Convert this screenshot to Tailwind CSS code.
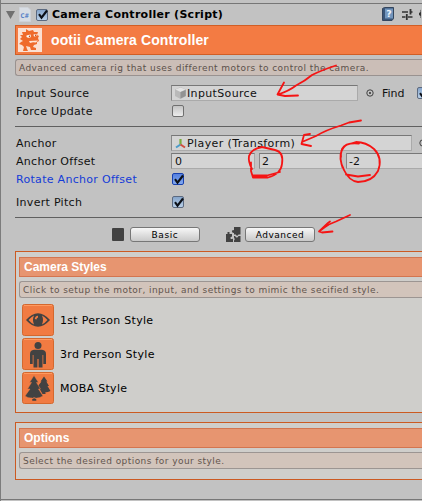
<!DOCTYPE html>
<html lang="en">
<head>
<meta charset="utf-8">
<title>Camera Controller</title>
<script src="https://cdn.jsdelivr.net/npm/@tailwindcss/browser@4"></script>
</head>
<body class="relative h-[501px] w-[422px] overflow-hidden bg-[#c2c2c2] font-['DejaVu_Sans',sans-serif] text-[11px] leading-[16px] text-[#111] whitespace-nowrap">
<svg width="0" height="0" class="absolute">
  <defs>
    <symbol id="tick" viewBox="0 0 13 13"><path d="M3 6.2 5.5 9.7 11 2.5" fill="none" stroke="#0c1018" stroke-width="2.1"/></symbol>
  </defs>
</svg>
<main class="h-[501px] w-[422px] overflow-hidden border-l border-[#7c7c7c] pt-[3px]">
  <header class="flex h-[22px] items-center border-t border-[#767676]">
    <svg class="ml-[5px] h-[8px] w-[9px]" viewBox="0 0 9 8"><path d="M0 0H9L4.5 8Z" fill="#707070"/></svg>
    <svg class="ml-[4px] h-[15px] w-[12px]" viewBox="0 0 12 15"><path d="M.5 .5H9L11.5 3V14.5H.5Z" fill="#d8dde4" stroke="#ced2d8"/><text x="1.5" y="10.5" font-family="DejaVu Sans" font-weight="bold" font-size="6.5" textLength="8.5" lengthAdjust="spacingAndGlyphs" fill="#5a83c8">C#</text></svg>
    <span class="ml-[5px] flex h-[12px] w-[12px] items-center justify-center rounded-[2px] border border-[#5c6a80] bg-linear-to-b from-[#86a5cb] to-[#b9d0e8]"><svg class="h-[13px] w-[13px] shrink-0"><use href="#tick"/></svg></span>
    <h1 class="ml-[4px] w-[330px] text-[11px] font-bold tracking-[0.28px] text-black">Camera Controller (Script)</h1>
    <svg class="h-[15px] w-[39px] shrink-0" viewBox="0 0 40 15" preserveAspectRatio="xMinYMid slice"><path d="M.5 1.5 2.5 .5H11.5V11.5L10 13.5H.5Z" fill="#3a5577" stroke="#34465e"/><rect x="3" y="1.5" width="8" height="10" fill="#7396bd"/><text x="4.2" y="9.8" font-family="DejaVu Sans" font-weight="bold" font-size="9" textLength="5.5" lengthAdjust="spacingAndGlyphs" fill="#eef5fc">?</text><path d="M20 5H26M29 5H30.500M20 10H23.500M26 10H30.500" stroke="#333" stroke-width="1.6"/><path d="M28.500 2V7.500M24.800 7V13" stroke="#333" stroke-width="1.8"/><path d="M40 2 38.5 3V5L37 6V8L38.5 9V11L40 11Z" fill="#333"/></svg>
  </header>

  <section class="ml-[14px] flex h-[30px] items-center border border-r-0 border-[#d05e26] bg-[#f37b43]">
    <svg class="ml-[2px] h-[24px] w-[24px]" viewBox="0 0 24 24"><rect width="24" height="24" fill="#fbe0d2"/><path d="M4 4 8 4 8 1 11 3 15 2 16 4 20 4 19 7 21 8 20 10 21 13 19 14 19 16 16 17 15 19 18 20 18 22H13L12 19 8 18 9 21 10 23H5L6 19 4 17 1 16 3 14 5 13 2 11 4 9 2 7 5 7Z" fill="#ef6b2c"/><path d="M8.500 7.500 12.500 6.500 13 9Q10.500 10.500 8.500 9Z" fill="#fff"/><path d="M15.500 6.500 18.500 6 18.500 8 16 8.500Z" fill="#fff"/><circle cx="11.500" cy="8.200" r=".8" fill="#b3430e"/><circle cx="17.500" cy="7.300" r=".7" fill="#b3430e"/><path d="M11 13 20 12.500 18 14.500 15 14.200 12 15Z" fill="#ffe4d4"/></svg>
    <h2 class="ml-[9px] font-['Liberation_Sans',sans-serif] text-[14px] font-bold tracking-[0.1px] text-white">ootii Camera Controller</h2>
  </section>
  <p class="mt-[4px] ml-[14px] h-[17px] rounded-l-[3px] border border-r-0 border-[#999290] bg-[#cbbeb7] pl-[3px] text-[9px] leading-[16px] tracking-[0.44px] text-[#5b514b]">Advanced camera rig that uses different motors to control the camera.</p>

  <div class="mt-[9px] flex h-[16px]">
    <span class="w-[155px] shrink-0 pt-px pl-[15px] tracking-[0.3px]">Input Source</span>
    <span class="ml-[15px] flex h-[16px] w-[187px] shrink-0 items-center border border-[#aaa] border-t-[#777] border-l-[#888] bg-[#d4d4d4] pl-[3px]">
      <svg class="h-[12px] w-[11px]" viewBox="0 0 11 12"><path d="M5.5 0 11 2.5V9L5.5 12 0 9V2.5Z" fill="#b9b9b9"/><path d="M5.5 .4 10.5 2.6 5.5 5 .5 2.6Z" fill="#e4e4e4"/><path d="M5.5 5 10.7 3V9L5.5 11.5Z" fill="#929292"/></svg>
      <span class="ml-[1px] pt-px tracking-[0.35px]">InputSource</span>
    </span>
    <svg class="mt-[4px] ml-[8px] h-[8px] w-[8px] shrink-0" viewBox="0 0 8 8"><circle cx="4" cy="4" r="3.200" fill="none" stroke="#333" stroke-width=".9"/><circle cx="4" cy="4" r=".9" fill="#222"/></svg>
    <span class="ml-[8px] w-[35px] shrink-0 pt-px">Find</span>
    <span class="mt-[2px] flex h-[12px] w-[12px] shrink-0 items-center justify-center rounded-[2px] border border-[#5c6a80] bg-linear-to-b from-[#86a5cb] to-[#b9d0e8]"><svg class="h-[13px] w-[13px] shrink-0"><use href="#tick"/></svg></span>
  </div>
  <div class="mt-[2px] flex h-[16px] items-center">
    <span class="w-[171px] pt-[2px] pl-[15px] tracking-[0.3px]">Force Update</span>
    <span class="h-[12px] w-[12px] rounded-[2px] border border-[#707070] bg-linear-to-b from-[#c4c4c4] to-[#ededed]"></span>
  </div>
  <div class="mt-[7px] ml-[14px] h-px bg-[#606060]"></div>

  <div class="mt-[8px] flex h-[16px]">
    <span class="w-[170px] shrink-0 pt-px pl-[15px] tracking-[0.3px]">Anchor</span>
    <span class="flex h-[16px] w-[241px] shrink-0 items-center border border-[#aaa] border-t-[#777] border-l-[#888] bg-[#d4d4d4] pl-[3px]">
      <svg class="h-[11px] w-[11px]" viewBox="0 0 11 11"><path d="M5.5 6.5V1" stroke="#79ac3c" stroke-width="2.200"/><path d="M5.5 6.5 1 9.5" stroke="#4b9bc8" stroke-width="2"/><path d="M5.5 6.5 10 9.5" stroke="#d24d3d" stroke-width="2"/></svg>
      <span class="ml-[1px] pt-px tracking-[0.4px]">Player (Transform)</span>
    </span>
    <svg class="mt-[4px] ml-[7px] h-[8px] w-[8px] shrink-0" viewBox="0 0 8 8"><circle cx="4" cy="4" r="3.200" fill="none" stroke="#333" stroke-width=".9"/></svg>
  </div>
  <div class="mt-[2px] flex h-[16px]">
    <span class="w-[170px] shrink-0 pt-px pl-[15px] tracking-[0.3px]">Anchor Offset</span>
    <span class="h-[16px] w-[84px] shrink-0 border border-[#aaa] border-t-[#777] border-l-[#888] bg-[#d4d4d4] pl-[3px] leading-[15px]">0</span>
    <span class="ml-[4px] h-[16px] w-[83px] shrink-0 border border-[#aaa] border-t-[#777] border-l-[#888] bg-[#d4d4d4] pl-[2px] leading-[15px]">2</span>
    <span class="ml-[4px] h-[16px] grow border border-r-0 border-[#aaa] border-t-[#777] border-l-[#888] bg-[#d4d4d4] pl-[2px] leading-[15px]">-2</span>
  </div>
  <div class="mt-[2px] flex h-[16px] items-center">
    <span class="w-[171px] pt-[2px] pl-[15px] tracking-[0.3px] text-[#143cd8]">Rotate Anchor Offset</span>
    <span class="flex h-[12px] w-[12px] items-center justify-center rounded-[2px] border border-[#1740ae] bg-linear-to-b from-[#5580df] to-[#81a8f0]"><svg class="h-[13px] w-[13px] shrink-0"><use href="#tick"/></svg></span>
  </div>
  <div class="mt-[7px] flex h-[16px] items-center">
    <span class="w-[171px] pt-[2px] pl-[15px] tracking-[0.3px]">Invert Pitch</span>
    <span class="flex h-[12px] w-[12px] items-center justify-center rounded-[2px] border border-[#5c6a80] bg-linear-to-b from-[#86a5cb] to-[#b9d0e8]"><svg class="h-[13px] w-[13px] shrink-0"><use href="#tick"/></svg></span>
  </div>
  <div class="mt-[7px] ml-[14px] h-px bg-[#606060]"></div>

  <div class="mt-[9px] flex h-[15px] items-center pl-[111px]">
    <span class="h-[13px] w-[12px] rounded-[1px] bg-[#424242]"></span>
    <button class="ml-[6px] h-[15px] w-[70px] rounded-[3px] border border-[#777] bg-linear-to-b from-[#f7f7f7] to-[#c9c9c9] text-[9px] leading-[14px] tracking-[0.6px] text-black">Basic</button>
    <svg class="ml-[26px] h-[15px] w-[15px]" viewBox="0 0 15 15"><path d="M8 0H14.500V7.500H12.500Q11 10 9.800 7.500H8V6Q5.500 5.500 6 3.500L8 3ZM0 7H1.500V5H3.500V7H6V9.500Q3.800 10 4.500 11.500Q5.500 12.500 7 11.500V15H0ZM8 9H9Q11 12 12.500 9H14.500V15H8V13.500Q9.500 12.500 8 10.500Z" fill="#424242"/></svg>
    <button class="ml-[4px] h-[15px] w-[70px] rounded-[3px] border border-[#777] bg-linear-to-b from-[#f7f7f7] to-[#c9c9c9] text-[9px] leading-[14px] tracking-[0.5px] text-black">Advanced</button>
  </div>

  <section class="mt-[9px] ml-[14px] h-[162px] border border-r-0 border-[#cb5a22] bg-[#cfcecb] pt-[5px] pl-[3px]">
    <h3 class="h-[20px] border border-r-0 border-[#d37550] bg-[#e79570] pl-[4px] font-['Liberation_Sans',sans-serif] text-[12px] leading-[19px] font-bold text-white">Camera Styles</h3>
    <p class="mt-[4px] h-[17px] rounded-l-[3px] border border-r-0 border-[#9c9592] bg-[#d2c4bb] pl-[3px] text-[9px] leading-[16px] tracking-[0.44px] text-[#62554e]">Click to setup the motor, input, and settings to mimic the secified style.</p>
    <ul class="mt-[6px] ml-[3px] flex flex-col gap-[2px] text-black">
      <li class="flex h-[32px] items-center gap-[6px]">
        <svg class="h-[32px] w-[32px]" viewBox="0 0 32 32"><rect x=".5" y=".5" width="31" height="31" rx="2" fill="#f17b42" stroke="#d4682e"/><path d="M2 1.5H30" stroke="#ff9a60"/><path d="M4 16Q16 2.500 28 16Q16 29.500 4 16Z" fill="#424242"/><path d="M6.500 16Q9.500 12.500 12 11.500Q10 16 12 20.500Q9.500 19.500 6.500 16ZM25.500 16Q22.500 12.500 20 11.500Q22 16 20 20.500Q22.500 19.500 25.500 16Z" fill="#f17b42"/><path d="M12.800 15Q13 12 16 11.800V13.500Q14.500 14 14.500 15.500Z" fill="#f17b42"/></svg>
        <span class="pt-[2px] tracking-[0.3px]">1st Person Style</span>
      </li>
      <li class="flex h-[32px] items-center gap-[6px]">
        <svg class="h-[32px] w-[32px]" viewBox="0 0 32 32"><rect x=".5" y=".5" width="31" height="31" rx="2" fill="#f17b42" stroke="#d4682e"/><path d="M2 1.5H30" stroke="#ff9a60"/><circle cx="16" cy="7.5" r="3.5" fill="#424242"/><path d="M12 11.7H20Q24 12 24 16V26H21.3V17H20.5V29.5H16.6V21H15.4V29.5H11.5V17H10.7V26H8V16Q8 12 12 11.7Z" fill="#424242"/></svg>
        <span class="pt-[2px] tracking-[0.3px]">3rd Person Style</span>
      </li>
      <li class="flex h-[32px] items-center gap-[6px]">
        <svg class="h-[32px] w-[32px]" viewBox="0 0 32 32"><rect x=".5" y=".5" width="31" height="31" rx="2" fill="#f17b42" stroke="#d4682e"/><path d="M2 1.5H30" stroke="#ff9a60"/><path d="M22 4.500 25.500 9.500H24.300L27 14H25.500L28.500 19Q26 20.500 23.500 20V22H20.500L16 14 19.500 9.500H18.500Z" fill="#424242"/><path d="M12 3.500 16.500 10.500H14.500L18.500 17H16.500L21 24Q17 26.500 14.500 26V29H10V26Q6 26.500 3 24L8 17H5.500L9.500 10.500H7.500Z" fill="#424242" stroke="#f17b42" stroke-width=".5"/><path d="M9 27Q12 24.500 15.500 27" fill="none" stroke="#f17b42"/></svg>
        <span class="pt-[2px] tracking-[0.3px]">MOBA Style</span>
      </li>
    </ul>
  </section>

  <section class="mt-[9px] ml-[14px] h-[58px] border border-r-0 border-[#cb5a22] bg-[#cfcecb] pt-[5px] pl-[3px]">
    <h3 class="h-[20px] border border-r-0 border-[#d37550] bg-[#e79570] pl-[4px] font-['Liberation_Sans',sans-serif] text-[12px] leading-[19px] font-bold text-white">Options</h3>
    <p class="mt-[4px] h-[17px] rounded-l-[3px] border border-r-0 border-[#9c9592] bg-[#d2c4bb] pl-[3px] text-[9px] leading-[16px] tracking-[0.44px] text-[#62554e]">Select the desired options for your style.</p>
  </section>
  <div class="mt-[19px] h-px bg-[#777]"></div>
</main>

<!-- Hand-drawn red annotations -->
<svg class="pointer-events-none absolute top-0 left-0 h-[501px] w-[422px]" viewBox="0 0 422 501" fill="none" stroke="#f51414" stroke-width="1.8" stroke-linecap="round" stroke-linejoin="round">
  <path d="M336 65.5Q322 70 312 75Q305 81 296 85.5Q289 91 278 94.5M284 82.5 277.5 94.5 285 96 298 95.5"/>
  <path d="M361 120.5 349 122.5 341 125.5Q326 130 316 136L302 142M310 134 304 135 301.5 144 311 146"/>
  <path d="M350 215 336 221.5Q329 224 325 227L319 231.5M330 221.5 328 223 319 231.500 322 232.500 332.500 231.500"/>
  <path d="M251 162.5 251 171 253 177.5H268Q281 174 282 164Q284 152 275 150L262 147Q251 149 249 156Q248 162 252 169M253 175.5H267L280 172"/>
  <path d="M359 143.5Q346 142 342 149Q338 159 344 170Q349 181 358 182Q372 182 378 171Q383 158 374 149Q366 142 356 142L346 145Q340 150 341 157M346 174.5 358 176.5 370 175"/>
</svg>
</body>
</html>
